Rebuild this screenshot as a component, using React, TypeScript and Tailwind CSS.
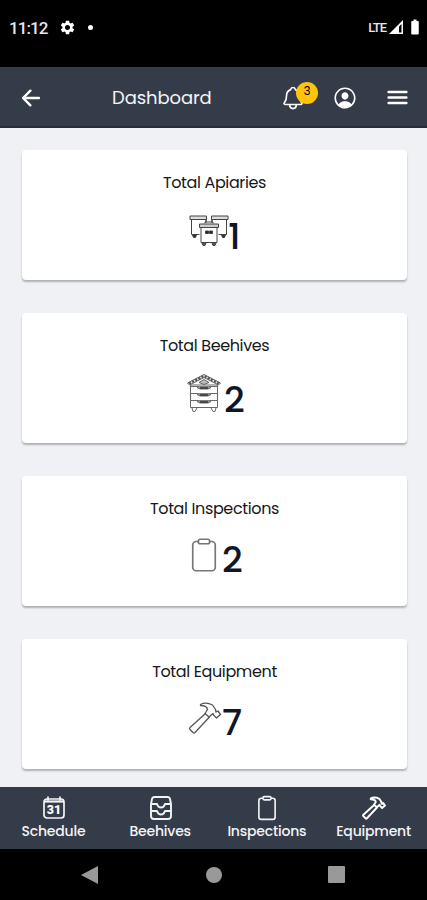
import React from "react";
import { IoArrowBack, IoNotificationsOutline, IoPersonCircleOutline, IoMenu, IoClipboardOutline } from "react-icons/io5";
import { MdSettings, MdBatteryFull } from "react-icons/md";

function ApiaryIcon() {
  return (
    <svg viewBox="0 0 40 34" className="h-[34px] w-10" fill="none" stroke="#444" strokeWidth="1">
      <path d="M2.500 5.500v15h8M37.500 5.500v15h-8" />
      <path d="M1 2h16.500v3.500H1zM22.500 2H39v3.500H22.500z" fill="#ddd" />
      <path d="M17 5.500v3M23 5.500v3" strokeWidth="1.500" />
      <path d="M3.500 21l1 2.500h2l1-2.500M32.500 21l1 2.500h2l1-2.500" fill="#333" />
      <path d="M12 13.500h16v15H12z" fill="#fff" />
      <path d="M10.500 10h19v3.500h-19z" fill="#ccc" />
      <path d="M16 9.500V8h8v1.500" />
      <path d="M16.500 17h3v2.500h-3zM20.500 17h3v2.500h-3z" fill="#222" />
      <path d="M13 29l1 2.500h2l1-2.500M23 29l1 2.500h2l1-2.500" fill="#555" />
    </svg>
  );
}

function HiveIcon() {
  return (
    <svg viewBox="0 0 34 40" className="h-10 w-[34px]" fill="none" stroke="#666" strokeWidth="1">
      <path d="M.500 10L17 1.500 33.500 10 31.500 12 17 4.500 2.500 12z" fill="#ddd" />
      <path d="M2 10.500L17 3 32 10.500" stroke="#555" strokeWidth="2.500" strokeDasharray="2 1.500" />
      <path d="M12 9.500l5-3 5 3-5 2z" fill="#bbb" />
      <path d="M3.500 12h27v22.500h-27zM3.500 13.500h27M3.500 20.500h27M3.500 27.500h27" />
      <path d="M10.500 13.500v1.500l3 1h7l3-1v-1.500M10.500 20.500v1.500l3 1h7l3-1v-1.500M10.500 27.500v1.500l3 1h7l3-1v-1.500" fill="#999" />
      <path d="M13 15h8M13 22h8M13 29h8" stroke="#333" strokeWidth="1.300" />
      <path d="M5 35l1 3.500h2L10 35M24 35l2 3.500h2L29 35" />
    </svg>
  );
}

function HammerIcon({ nav = false }: { nav?: boolean }) {
  return (
    <svg viewBox="0 0 34 34" className={nav ? "ml-px h-6 w-6" : "h-[34px] w-[34px]"} fill="none" stroke={nav ? "#fff" : "#555"} strokeWidth={nav ? 2.800 : 1.300} strokeLinejoin="round">
      <path d="M17.500 12.500L2 26.500Q1 27.500 2 28.500l3 3Q6 32.500 7 31.500L21.500 16" />
      <path d="M12.500 3.500Q18 .5 24.500 4l3 4.500.5 2.500 2-1 2.500 3.500-4 3.500-3-3-.5-1.500-4 3.500-4-3.500 2.500-4Q19 4.500 12.500 4.500z" />
    </svg>
  );
}

function CalendarIcon() {
  return (
    <svg viewBox="0 0 24 24" className="ml-px h-6 w-6" fill="none" stroke="#f3f4f6" strokeWidth="1.700">
      <rect x="2" y="3" width="20" height="19" rx="3" />
      <path d="M2 5.500h20" strokeWidth="2.200" />
      <path d="M6 1v3M18 1v3" strokeLinecap="round" />
      <text x="12" y="18.300" textAnchor="middle" fill="#fff" stroke="none" fontFamily="Roboto, sans-serif" fontWeight="900" fontSize="12.500">31</text>
    </svg>
  );
}

function NavHiveIcon() {
  return (
    <svg viewBox="0 0 24 26" className="ml-px h-[26px] w-6" fill="none" stroke="#f3f4f6" strokeWidth="1.900" strokeLinejoin="round">
      <path d="M5.500 2h13q2 0 2.500 2l1 5v12q0 3-3 3H5q-3 0-3-3V9l1-5q.500-2 2.500-2z" />
      <path d="M2 9h6q1 3.500 4 3.500T16 9h6M2 16h6q1 3.500 4 3.500t4-3.500h6" />
    </svg>
  );
}

const cards = [
  { title: "Total Apiaries", value: "1", icon: <ApiaryIcon />, row: "ml-[167px]", iconBox: "mt-[64px] w-10", number: "mt-[69px] -ml-px" },
  { title: "Total Beehives", value: "2", icon: <HiveIcon />, row: "ml-[164px]", iconBox: "mt-[60px] w-9", number: "mt-[69px] ml-[2px]" },
  { title: "Total Inspections", value: "2", icon: <IoClipboardOutline className="h-9 w-9 text-[#777] [&_*]:[stroke-width:24px]" />, row: "ml-[164px]", iconBox: "mt-[61px] w-9", number: "mt-[66px]" },
  { title: "Total Equipment", value: "7", icon: <HammerIcon />, row: "ml-[166px]", iconBox: "mt-[62px] w-[34px]", number: "mt-[66px]" },
];

const tabs = [
  { label: "Schedule", icon: <CalendarIcon /> },
  { label: "Beehives", icon: <NavHiveIcon /> },
  { label: "Inspections", icon: <IoClipboardOutline className="ml-px h-[26px] w-[26px] text-gray-100" /> },
  { label: "Equipment", icon: <HammerIcon nav /> },
];

export default function App() {
  return (
    <div className="flex h-[900px] w-[427px] flex-col overflow-hidden bg-[#eff1f5] font-[Poppins,Inter,sans-serif]">
      <div className="flex h-[67px] shrink-0 bg-black pt-[17px] text-white">
        <span className="ml-[9px] h-5 w-[50px] font-[Roboto,sans-serif] text-[17px] leading-[22px] font-medium tracking-[-0.9px] text-gray-200">11:12</span>
        <MdSettings className="mt-[2px] h-[17px] w-[17px]" />
        <span className="mt-2 ml-[12px] h-[5px] w-[5px] rounded-full bg-white" />
        <span className="ml-auto font-[Roboto,sans-serif] text-[13px] leading-[21px] font-medium tracking-[-1px] text-gray-200">LTE</span>
        <svg viewBox="0 0 14 14" className="mt-[3px] mr-[3px] ml-[3px] h-[14px] w-[14px]">
          <path d="M0 14L14 0v14z" fill="#fff" />
          <path d="M10 6.500l2.500-2.500v8.500H10z" fill="#000" />
        </svg>
        <MdBatteryFull className="mt-px mr-[3px] h-[18px] w-[18px]" />
      </div>

      <header className="flex h-[61px] shrink-0 items-center border-b-2 border-[#252d3a] bg-[#353c49] pt-[2px] text-white">
        <IoArrowBack className="ml-[18px] h-[26px] w-[26px] shrink-0" />
        <h1 className="ml-[68px] w-[169px] text-[18px] tracking-[-0.1px] text-gray-100">Dashboard</h1>
        <div className="relative h-[26px] w-[26px] shrink-0 -ml-px">
          <IoNotificationsOutline className="h-[26px] w-[26px]" />
          <span className="absolute -top-[3px] left-[16px] flex h-[22px] w-[22px] items-center justify-center rounded-full bg-[#ffc409] pb-[3px] text-[12px] text-black">3</span>
        </div>
        <IoPersonCircleOutline className="ml-[26px] h-[26px] w-[26px] shrink-0" />
        <IoMenu className="ml-[26px] h-[27px] w-[27px] shrink-0" />
      </header>

      <main className="flex min-h-0 flex-1 flex-col gap-[33px] pt-[22px] pr-5 pl-[22px]">
        {cards.map((card) => (
          <section key={card.title} className="grid h-[130px] shrink-0 rounded-[4px] bg-white shadow-[0_2px_2px_rgba(0,0,0,0.27)]">
            <h2 className="col-start-1 row-start-1 mt-[22px] h-6 text-center text-base leading-[22px] tracking-[-0.37px] text-[#151820]">{card.title}</h2>
            <div className={"col-start-1 row-start-1 flex " + card.row}>
              <div className={"flex h-10 shrink-0 items-start justify-center " + card.iconBox}>{card.icon}</div>
              <strong className={"h-9 text-[36px] leading-9 font-medium text-[#101529] " + card.number}>{card.value}</strong>
            </div>
          </section>
        ))}
      </main>

      <nav className="grid h-[62px] shrink-0 grid-cols-4 bg-[#353c49] pt-[8px] text-gray-100">
        {tabs.map((tab) => (
          <div key={tab.label} className="flex flex-col items-center">
            <div className="flex h-[26px] items-center">{tab.icon}</div>
            <span className="text-[14px] leading-5 font-medium tracking-[-0.2px]">{tab.label}</span>
          </div>
        ))}
      </nav>
      <div className="flex h-[51px] shrink-0 items-center bg-black">
        <svg viewBox="0 0 17 18" className="ml-[81px] h-[18px] w-[17px]"><path d="M0 9L17 0v18z" fill="#999" /></svg>
        <span className="ml-[108px] h-4 w-4 rounded-full bg-[#999]" />
        <span className="ml-[106px] h-[17px] w-[17px] rounded-[1px] bg-[#999]" />
      </div>
    </div>
  );
}
